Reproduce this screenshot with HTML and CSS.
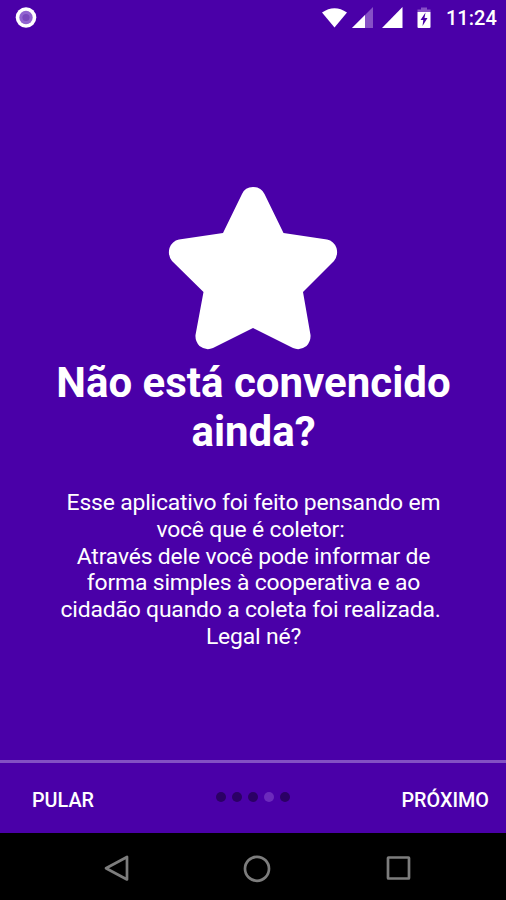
FILE: index.html
```
<!DOCTYPE html>
<html lang="pt-BR">
<head>
    <meta charset="UTF-8">
    <meta name="viewport" content="width=device-width, initial-scale=1.0">
    <link rel="stylesheet" href="styles.css">
    <title>Introdução</title>
</head>
<body>

    <header class="status-bar">
        <svg class="record" width="22" height="22" viewBox="0 0 22 22">
            <circle cx="11" cy="10.500" r="10.300" fill="#fff"/>
            <circle cx="11" cy="10.500" r="6.700" fill="#9164d0"/>
            <circle cx="11" cy="10.500" r="3.600" fill="#7a49bd"/>
        </svg>
        <svg class="signals" width="116" height="24" viewBox="0 0 116 24">
            <!-- wifi -->
            <path d="M2 6.5Q14.5-2 27 6.5L14.5 21.5Z" fill="#fff"/>
            <!-- sim 1 -->
            <path d="M32 22L53 1V22Z" fill="#8650c6"/>
            <path d="M32 22L45 9V22Z" fill="#fff"/>
            <!-- sim 2 -->
            <path d="M62 22L82.500 1V22Z" fill="#fff"/>
            <!-- battery -->
            <path d="M97.500 6V3.500H101V1.500H107V3.500H110.500V6Z" fill="#8650c6"/>
            <path d="M97.500 6H110.500V21Q110.500 22 109.500 22H98.500Q97.500 22 97.500 21Z" fill="#fff"/>
            <path d="M105.500 6.500L100.500 14H103.300L102.500 20L107.500 12H104.500Z" fill="#4a00a8"/>
        </svg>
        <span class="clock">11:24</span>
    </header>

    <main class="slide">
        <svg class="star" width="170" height="164" viewBox="0 0 170 164">
            <path d="M74 8Q77 1 85 1Q93 1 96.500 8L115.500 47L159 53.500Q166 55 168.500 62Q170.500 69 166 75L135 106L142.500 149Q143 155 138.500 160Q132 165 125 162L85 142L45 162Q38 165 31.500 160Q27 155 27.500 149L35.500 106L4 75Q-.5 69 1.500 62Q4 55 11 53.500L55 47Z" fill="#fff"/>
        </svg>
        <h1>Não está convencido<br>ainda?</h1>
        <p>Esse aplicativo foi feito pensando em<br>
            <span class="trailing">você que é coletor:</span><br>
            Através dele você pode informar de<br>
            forma simples à cooperativa e ao<br>
            <span class="trailing">cidadão quando a coleta foi realizada.</span><br>
            Legal né?</p>
    </main>

    <footer class="controls">
        <button class="skip">PULAR</button>
        <div class="dots">
            <span></span>
            <span></span>
            <span></span>
            <span class="active"></span>
            <span></span>
        </div>
        <button class="next">PRÓXIMO</button>
    </footer>

    <nav class="nav-bar">
        <svg width="30" height="30" viewBox="0 0 30 30">
            <path d="M26 4V26.500L5 15.200Z"/>
        </svg>
        <svg width="30" height="30" viewBox="0 0 30 30">
            <circle cx="15" cy="15.800" r="12"/>
        </svg>
        <svg width="30" height="30" viewBox="0 0 30 30">
            <rect x="5" y="4.500" width="21" height="21" rx=".5"/>
        </svg>
    </nav>

</body>
</html>
```

FILE: styles.css
```
body {
    font-family: Roboto, sans-serif;
    display: flex;
    flex-direction: column;
    height: 900px;
    margin: 0;
    background-color: #4a00a8;
    color: #fff;
    overflow: hidden;
}

.status-bar {
    display: flex;
    align-items: center;
    height: 36px;
    padding: 0 10px 0 15px;
    box-sizing: border-box;
}

.signals {
    margin-left: auto;
}

.clock {
    width: 50px;
    margin-left: 10px;
    font-size: 20px;
    font-weight: 500;
    line-height: 36px;
}

.slide {
    flex: 1;
    display: flex;
    flex-direction: column;
    align-items: center;
    padding-top: 150px;
    text-align: center;
}

.star {
    display: block;
}

h1 {
    margin: 8px 0 0;
    padding-left: 1px;
    font-size: 42px;
    font-weight: 700;
    line-height: 49px;
}

p {
    margin: 34px 0 0;
    padding-left: 1px;
    font-size: 22.9px;
    line-height: 26.8px;
    letter-spacing: -0.17px;
    white-space: nowrap;
}

.trailing {
    margin-right: 6px;
}

.controls {
    display: grid;
    grid-template-columns: 1fr auto 1fr;
    align-items: center;
    height: 73px;
    padding: 4px 17px 0 32px;
    border-top: 3px solid #8350c4;
    box-sizing: border-box;
}

button {
    padding: 0;
    border: none;
    background: none;
    color: #fff;
    font-family: inherit;
    font-size: 19.8px;
    font-weight: 500;
    cursor: pointer;
}

.skip {
    justify-self: start;
}

.next {
    justify-self: end;
}

.dots {
    display: flex;
    gap: 6.2px;
    margin: 0 0 6px -15px;
}

.dots span {
    width: 10px;
    height: 10px;
    border-radius: 50%;
    background-color: #2b0065;
}

.dots .active {
    background-color: #6c2abc;
}

.nav-bar {
    display: flex;
    justify-content: center;
    gap: 111px;
    height: 67px;
    padding-top: 20px;
    padding-left: 8px;
    box-sizing: border-box;
    background-color: #000;
}

.nav-bar svg {
    fill: none;
    stroke: #7d7d7d;
    stroke-width: 2.7;
    stroke-linejoin: round;
}
```
